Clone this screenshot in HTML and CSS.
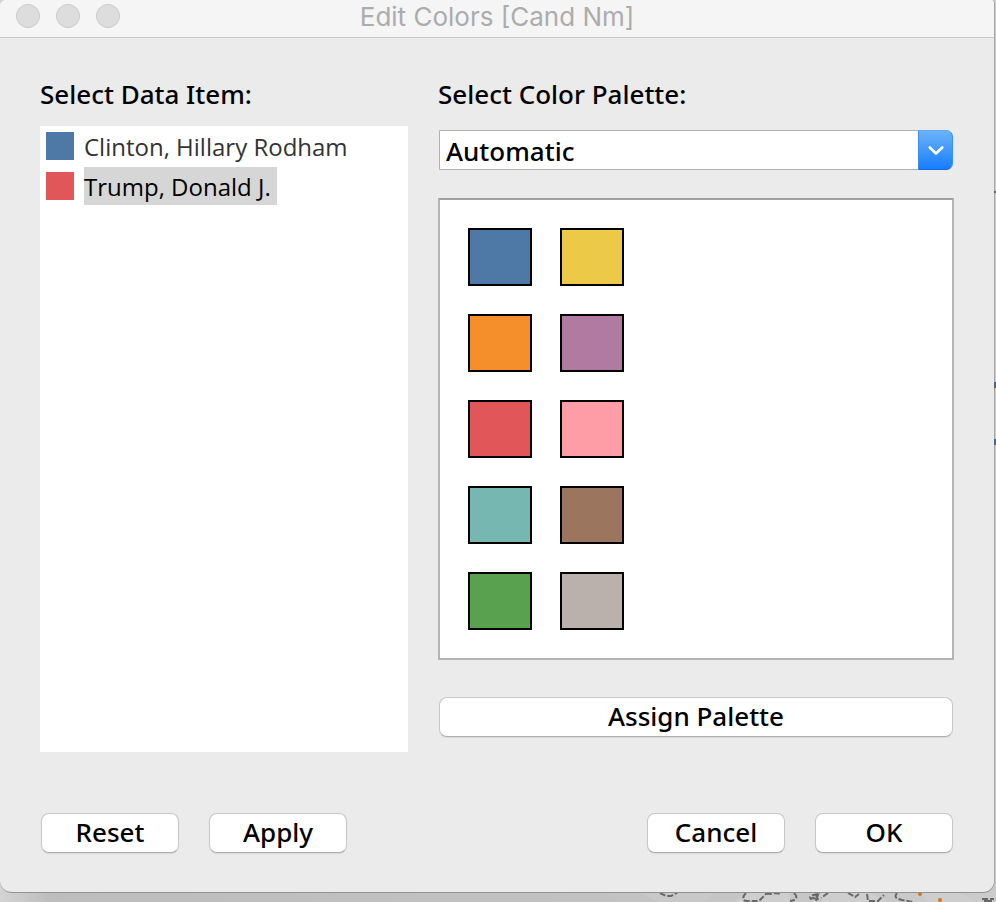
FILE: index.html
```
<!DOCTYPE html>
<html lang="en">
<head>
<meta charset="utf-8">
<title>Edit Colors [Cand Nm]</title>
<link rel="stylesheet" href="styles.css">
</head>
<body>
<section class="window">
  <header class="titlebar">
    <div class="lights">
      <button class="light" type="button" aria-label="Close"></button>
      <button class="light" type="button" aria-label="Minimize"></button>
      <button class="light" type="button" aria-label="Zoom"></button>
    </div>
    <h1 class="title">Edit Colors [Cand Nm]</h1>
  </header>
  <form class="content">
    <div class="columns">
      <div class="column">
        <h2 class="heading" id="items-label">Select Data Item:</h2>
        <ul class="items" aria-labelledby="items-label">
          <li><button class="item" type="button"><span class="chip blue"></span><span class="name">Clinton, Hillary Rodham</span></button></li>
          <li><button class="item selected" type="button"><span class="chip red"></span><span class="name">Trump, Donald J.</span></button></li>
        </ul>
      </div>
      <div class="column">
        <label class="heading" for="palette">Select Color Palette:</label>
        <div class="combo">
          <select id="palette" class="combo-select"><option>Automatic</option></select>
          <span class="combo-arrow">
            <svg width="16" height="10" viewBox="0 0 16 10" aria-hidden="true"><path d="M1.800 1.500 8 7.500 14.200 1.500" fill="none" stroke="#fff" stroke-width="2.600" stroke-linecap="round" stroke-linejoin="round"/></svg>
          </span>
        </div>
        <div class="palette">
          <button class="swatch blue" type="button" aria-label="Blue"></button>
          <button class="swatch yellow" type="button" aria-label="Yellow"></button>
          <button class="swatch orange" type="button" aria-label="Orange"></button>
          <button class="swatch purple" type="button" aria-label="Purple"></button>
          <button class="swatch red" type="button" aria-label="Red"></button>
          <button class="swatch pink" type="button" aria-label="Pink"></button>
          <button class="swatch teal" type="button" aria-label="Teal"></button>
          <button class="swatch brown" type="button" aria-label="Brown"></button>
          <button class="swatch green" type="button" aria-label="Green"></button>
          <button class="swatch gray" type="button" aria-label="Gray"></button>
        </div>
        <button class="button assign" type="button">Assign Palette</button>
      </div>
    </div>
    <div class="actions">
      <div class="group">
        <button class="button" type="button">Reset</button>
        <button class="button" type="button">Apply</button>
      </div>
      <div class="group">
        <button class="button" type="button">Cancel</button>
        <button class="button" type="button">OK</button>
      </div>
    </div>
  </form>
</section>
<svg class="map" width="396" height="9" viewBox="0 0 396 9" aria-hidden="true">
  <path fill="#cecece" d="M145 0h45v10h-55zM220 0h50l20 10h-80zM320 0h40l20 10h-50z"/>
  <path fill="#c8c8c8" d="M40 0h75l-12 10H60z"/>
  <g fill="none" stroke="#686868" stroke-width="2" stroke-dasharray="6 2">
    <path d="M60 0l6 3 5 0 7-4"/>
    <path d="M146 0c-4 4-4 8 1 8h12l8-8M166 0l4 1 6-1 5 1M194 0c4 4 3 7-4 8"/>
    <path d="M218 1c-5 1-10 2-7 5l7-4-2 6M213 5l8 2M228 0l-7 5"/>
    <path d="M248 0l7 4 4-3M267 1l1 7h10l6-6M297 0c-4 5 1 6 5 7l11 2"/>
    <path d="M382 6h8M384 8h6M391 9V6h5"/>
  </g>
  <circle cx="320" cy="1" r="2" fill="#d17720"/><circle cx="340" cy="7" r="2" fill="#d17720"/>
</svg>
<svg class="marks" width="2" height="254" viewBox="0 0 2 254" aria-hidden="true"><path fill="#666" d="M0 0h2v2H0z"/><path fill="#436791" d="M0 191h2v6H0zM0 248h2v6H0z"/><path fill="#cc8544" d="M0 197h1v2H0z"/></svg>
</body>
</html>
```
FILE: styles.css
```
* { box-sizing: border-box; }

body {
  display: flex;
  flex-direction: column;
  position: relative;
  min-height: 100vh;
  margin: 0;
  overflow-x: hidden;
  background: linear-gradient(90deg, #d4d4d4, #bdbdbd 50px, #c2c2c2 60%, #cbcbcb);
  color: #000;
  font-family: "Noto Sans", sans-serif;
  font-size: 26px;
  font-weight: 500;
}

button, select { font: inherit; color: inherit; margin: 0; }

.window {
  display: flex;
  flex: 1;
  flex-direction: column;
  margin-right: 1px;
  border-right: 1px solid #a6a6a6;
  border-bottom: 1px solid #929292;
  border-radius: 6px 4px 12px 12px;
  background: #ebebeb;
  overflow: hidden;
}

.titlebar {
  display: grid;
  grid-template-columns: 1fr auto 1fr;
  height: 38px;
  padding: 0 16px;
  border-bottom: 1px solid #c8c8c8;
  background: #f5f5f5;
}

.lights { display: flex; gap: 16px; padding-top: 4px; }

.light {
  width: 24px;
  height: 24px;
  padding: 0;
  border: 1px solid #cacaca;
  border-radius: 50%;
  background: #dddddd;
}

.title {
  margin: 0;
  color: #acacac;
  font-family: Inter, sans-serif;
  font-size: 26px;
  font-weight: 400;
  line-height: 34px;
}

.content {
  display: flex;
  flex: 1;
  flex-direction: column;
  padding: 38px 40px;
}

.columns {
  display: grid;
  grid-template-columns: 368fr 516fr;
  gap: 30px;
}

.column { display: flex; flex-direction: column; }

.heading {
  margin: 0;
  font-size: 26px;
  font-weight: 500;
  line-height: 36px;
}

.items {
  flex: 1;
  margin: 14px 0 0;
  padding: 0 6px;
  background: #fff;
  list-style: none;
}

.item {
  display: flex;
  align-items: center;
  gap: 10px;
  height: 40px;
  padding: 0;
  border: 0;
  background: none;
  color: #333;
  font-family: "Open Sans", sans-serif;
  font-size: 24px;
  font-weight: 400;
}

.chip { width: 28px; height: 28px; }
.name { padding: 1px 6px 0 0; line-height: 37px; white-space: nowrap; }
.selected { color: #000; }
.selected .name { background: #d6d6d6; }

.combo { position: relative; margin: 18px 1px 28px; }

.combo-select {
  display: block;
  width: 100%;
  height: 40px;
  padding: 2px 44px 0 6px;
  border: 1px solid #b0b0b0;
  border-radius: 0 7px 7px 0;
  appearance: none;
  background: #fff;
}

.combo-arrow {
  display: flex;
  align-items: center;
  justify-content: center;
  position: absolute;
  inset: 0 0 0 auto;
  width: 35px;
  padding-top: 2px;
  border: 1px solid #3a8ff8;
  border-top-color: #5ca8f7;
  border-bottom-color: #1668ee;
  border-radius: 0 7px 7px 0;
  background: linear-gradient(#6cb3fa, #167efc);
  pointer-events: none;
}

.palette {
  display: grid;
  grid-template-columns: 64px 64px;
  gap: 28px;
  padding: 28px;
  border: 2px solid #b4b4b4;
  border-top-color: #a0a0a0;
  background: #fff;
}

.swatch { height: 58px; padding: 0; border: 2px solid #000; }

.blue { background: #4e79a7; }
.yellow { background: #edc948; }
.orange { background: #f58f2c; }
.purple { background: #b07aa1; }
.red { background: #e15759; }
.pink { background: #ff9da7; }
.teal { background: #76b7b2; }
.brown { background: #9c755f; }
.green { background: #59a14f; }
.gray { background: #bab0ac; }

.button {
  width: 138px;
  height: 40px;
  padding: 0 0 1px;
  border: 1px solid #c8c8c8;
  border-bottom-color: #aeaeae;
  border-radius: 8px;
  background: #fff;
  box-shadow: 0 1px 1px #d8d8d8;
  line-height: 35px;
}

.assign { width: auto; margin: 37px 1px 15px; }

.actions {
  display: flex;
  justify-content: space-between;
  padding: 61px 1px 0;
}

.group { display: flex; gap: 30px; }

.map { display: block; align-self: flex-end; }

.marks { position: absolute; top: 191px; right: 0; }
```
